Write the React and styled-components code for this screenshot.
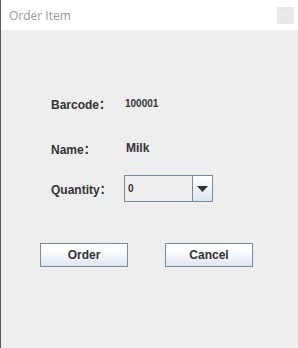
import React from "react";
import styled, { createGlobalStyle } from "styled-components";

const Global = createGlobalStyle`
  html, body { margin: 0; padding: 0; background: #eeeeee; }
  #root { width: 298px; height: 348px; }
`;

const Window = styled.div`
  width: 298px;
  height: 348px;
  box-sizing: border-box;
  border-left: 1px solid #5a5a5a;
  background: #eeeeee;
  display: flex;
  flex-direction: column;
  font-family: "Liberation Sans", "Noto Sans CJK SC", sans-serif;
`;

const TitleBar = styled.div`
  height: 30px;
  flex: none;
  background: #ffffff;
  display: flex;
  align-items: center;
  justify-content: space-between;
  padding: 0 4px 0 8px;
`;

const Title = styled.span`
  font-family: "Open Sans", "Noto Sans", sans-serif;
  font-size: 12px;
  color: #9a9a9a;
`;

const CloseBox = styled.div`
  width: 17px;
  height: 17px;
  background: #e8e8e8;
  display: flex;
  align-items: center;
  justify-content: center;
  color: #f6f6f6;
  font-size: 9px;
  font-family: "Liberation Sans", sans-serif;
`;

const Body = styled.div`
  flex: 1;
  display: flex;
  flex-direction: column;
  padding: 61px 0 0 39px;
`;

const Row = styled.div`
  display: grid;
  grid-template-columns: 84px auto;
  align-items: center;
  height: ${(p) => p.h}px;
  margin-bottom: ${(p) => p.mb}px;
`;

const Label = styled.span`
  padding-left: 11px;
  font-family: "Liberation Sans", "Noto Sans CJK SC", Arial, sans-serif;
  font-weight: bold;
  font-size: 12px;
  color: #333333;
`;

const Value = styled.span`
  font-family: "Liberation Sans", Arial, sans-serif;
  font-weight: bold;
  font-size: ${(p) => p.size}px;
  color: #333333;
  padding-left: ${(p) => p.pl || 0}px;
`;

const Combo = styled.div`
  width: 89px;
  height: 27px;
  box-sizing: border-box;
  border: 1px solid #7a8a99;
  display: flex;
  background: #eeeeee;
`;

const ComboText = styled.div`
  flex: 1;
  display: flex;
  align-items: center;
  padding-left: 3px;
  font-family: "Liberation Sans", Arial, sans-serif;
  font-weight: bold;
  font-size: 10px;
  color: #333;
`;

const ArrowBtn = styled.div`
  width: 19px;
  border-left: 1px solid #7a8a99;
  background: linear-gradient(#ffffff, #dce6f0);
  display: flex;
  align-items: center;
  justify-content: center;
`;

const Buttons = styled.div`
  display: flex;
  gap: 37px;
  margin-top: 41px;
`;

const Button = styled.button`
  width: 88px;
  height: 24px;
  box-sizing: border-box;
  border: 1px solid #7a8a99;
  background: linear-gradient(#fbfcfd 0%, #ffffff 30%, #dce6f2 100%);
  font-family: "Liberation Sans", Arial, sans-serif;
  font-weight: bold;
  font-size: 12px;
  color: #333333;
  padding: 0;
`;

export default function App() {
  return (
    <>
      <Global />
      <Window>
        <TitleBar>
          <Title>Order Item</Title>
          <CloseBox>«</CloseBox>
        </TitleBar>
        <Body>
          <Row h={24} mb={21}>
            <Label>Barcode：</Label>
            <Value size={10} pl={1}>100001</Value>
          </Row>
          <Row h={24} mb={15}>
            <Label>Name：</Label>
            <Value size={12} pl={2}>Milk</Value>
          </Row>
          <Row h={27} mb={0}>
            <Label>Quantity：</Label>
            <Combo>
              <ComboText>0</ComboText>
              <ArrowBtn>
                <svg width="11" height="6" viewBox="0 0 11 6">
                  <polygon points="0,0 11,0 5.5,6" fill="#333" />
                </svg>
              </ArrowBtn>
            </Combo>
          </Row>
          <Buttons>
            <Button>Order</Button>
            <Button>Cancel</Button>
          </Buttons>
        </Body>
      </Window>
    </>
  );
}
